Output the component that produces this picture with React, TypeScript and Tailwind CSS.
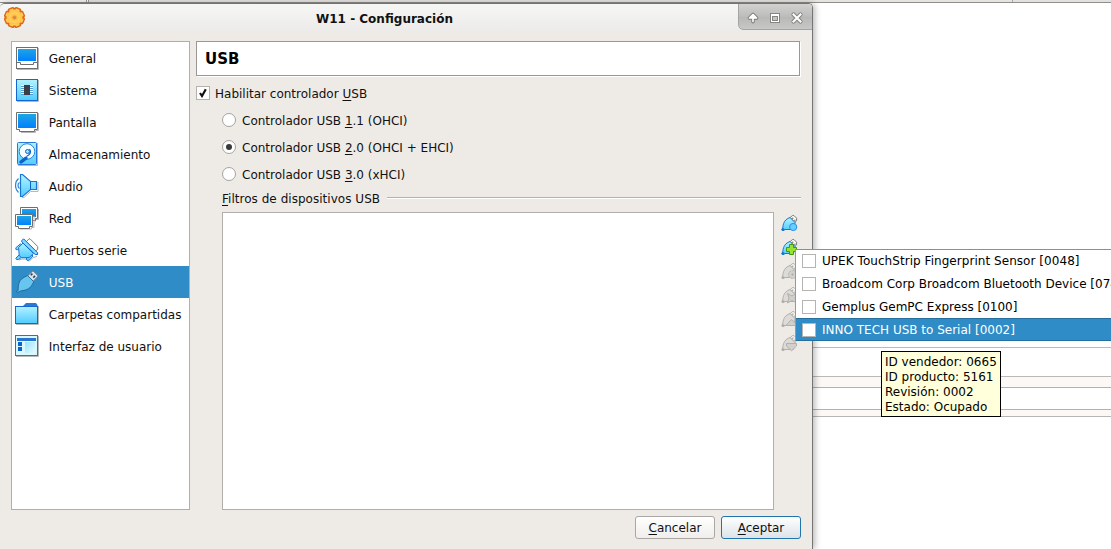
import React from 'react';

const DARK = '#0a62cc';

function Defs() {
  return (
    <svg width="0" height="0" className="absolute">
      <defs>
        <linearGradient id="screen" x1="0" y1="0" x2="0" y2="1">
          <stop offset="0" stopColor="#1fa5e4" />
          <stop offset="1" stopColor="#0080ff" />
        </linearGradient>
        <linearGradient id="aqua" x1="0" y1="0" x2="0" y2="1">
          <stop offset="0" stopColor="#b4f2ff" />
          <stop offset="1" stopColor="#50ccff" />
        </linearGradient>
        <linearGradient id="pale" x1="0" y1="0" x2="1" y2="1">
          <stop offset="0" stopColor="#98e4ff" />
          <stop offset="1" stopColor="#e4faff" />
        </linearGradient>
        <linearGradient id="gear" x1="0" y1="0" x2="0" y2="1">
          <stop offset="0" stopColor="#ffc95a" />
          <stop offset="0.6" stopColor="#ffc24a" />
          <stop offset="1" stopColor="#ffd95a" />
        </linearGradient>
      </defs>
    </svg>
  );
}

function Icon({ children }: { children: React.ReactNode }) {
  return (
    <svg width="24" height="24" viewBox="0 0 24 24" fill="none" className="shrink-0">
      {children}
    </svg>
  );
}

const icons = {
  general: (
    <Icon>
      <path d="M2 23.5H23.5V2" stroke="#b8b8b8" />
      <rect x="1.5" y="1.5" width="21" height="21" fill="#fff" stroke="#6e6e6e" />
      <rect x="3" y="3" width="18" height="12" fill="url(#screen)" />
      <path d="M2 16.5H5.5V18.5H18.5V16.5H22" stroke="#6e6e6e" />
    </Icon>
  ),
  system: (
    <Icon>
      <path d="M2 23.5H23.5V2" stroke="#b8b8b8" />
      <rect x="1.5" y="1.5" width="21" height="21" fill="url(#aqua)" stroke="#1267d2" />
      <path d="M6 7.5H18M6 9.5H18M6 11.5H18M6 13.5H18M6 15.5H18" stroke="#fff" />
      <path d="M6 8.5H18M6 10.5H18M6 12.5H18M6 14.5H18M6 16.5H18" stroke="#4f9fd0" />
      <rect x="9" y="7" width="6" height="10" fill="#3b3e48" />
    </Icon>
  ),
  display: (
    <Icon>
      <path d="M23.5 3V20.5H20.5V22.5H6" stroke="#b8b8b8" />
      <path d="M1.5 2.5H22.5V19.5H19.5V21.5H4.5V19.5H1.5Z" fill="#fff" stroke="#6e6e6e" />
      <rect x="3" y="4" width="18" height="14" fill="url(#screen)" />
    </Icon>
  ),
  storage: (
    <Icon>
      <path d="M3 23.5H22.5V1" stroke="#b8b8b8" />
      <rect x="2.5" y="0.5" width="19" height="22" rx="1" fill="url(#aqua)" stroke="#2a78d6" />
      <circle cx="12" cy="9.5" r="7.8" fill="#f4fdff" stroke="#2584dd" />
      <circle cx="12.5" cy="9.5" r="2" fill="#a5e3fa" stroke={DARK} />
      <path d="M14.5 7C16.5 9.5 15.5 12.5 11.5 14.5" stroke={DARK} strokeWidth="1.2" />
      <path d="M6 20L11 16.2" stroke={DARK} strokeWidth="3.4" strokeLinecap="round" />
    </Icon>
  ),
  audio: (
    <Icon>
      <path d="M7 23.5H9L15.5 17.5H23V8" stroke="#b8b8b8" />
      <path d="M3.5 4.5C-.5 8-.5 15 3.5 18.5M4.5 8.5C2.5 10 2.5 13 4.5 14.5" stroke="#2585da" strokeWidth="1.2" />
      <path d="M5.5 .5H7.5L15.5 7.5H21.5V15.5H15.5L7.5 22.5H5.5Z" fill="url(#aqua)" stroke="#1b76d3" strokeWidth="1.2" />
      <path d="M15.5 7.5V15.5" stroke={DARK} />
    </Icon>
  ),
  network: (
    <Icon>
      <path d="M23.5 3V13.5H20.5V15.5" stroke="#b8b8b8" />
      <path d="M5.5 1.5H22.5V12.5H20.5V14.5H5.5Z" fill="#fff" stroke="#6e6e6e" />
      <rect x="7" y="3" width="14" height="8" fill="url(#screen)" />
      <path d="M19 10V21.5H16.5V23H5" stroke="#b8b8b8" />
      <path d="M.5 8.5H17.5V20.5H14.5V22.5H3.5V20.5H.5Z" fill="#fff" stroke="#6e6e6e" />
      <rect x="2" y="10" width="14" height="9" fill="url(#screen)" />
    </Icon>
  ),
  serial: (
    <Icon>
      <path d="M4 22L7 21H12M14 23.5L18 19.5L22 18.5" stroke="#b0b0b0" />
      <path d="M11.5 3.5L14 .8H15L22.7 8.5V11.5L20.5 13Z" fill="#fff" stroke="#808080" />
      <path d="M.8 9.8L5.5 5.8L7.5 7.8L2.8 11.6H1Z" fill="#8be2ff" stroke="#1674d3" />
      <path d="M11 21L16 16L18 18L14 22.3H12Z" fill="#69d4ff" stroke="#1674d3" />
      <path d="M.8 20.2L4.5 16.5L7 19L3.5 21.5H1.5Z" fill="#69d4ff" stroke="#1674d3" />
      <path d="M8 5L3.6 9.5L4.2 17.5L6.5 19.7L14 19.6L18.5 15.5Z" fill="url(#aqua)" stroke="#1674d3" />
      <path d="M6.8 2.6L8.6 .8L22.6 14.8V16.5H20.2L6.8 4Z" fill="#7fdcff" stroke="#0c67ce" />
    </Icon>
  ),
  usb: (
    <Icon>
      <path d="M12.5 6L18 .8L23.2 6L18 11.5Z" fill="#d9e2ea" stroke="#6d7f8d" />
      <path d="M15.8 5.2L17.4 3.6M18.3 7.6L20 5.9" stroke="#2e4353" strokeWidth="1.6" />
      <path d="M2.5 21.2C4 19.5 2.5 18 3.8 13.5C5 9 8.5 7.5 12.5 5.5L18.8 11.7C16.8 15.5 15.3 18.5 10.5 20C7 21 5 20.5 2.5 22.7L1.2 21.5Z" fill="#67c6ef" stroke="#22689d" />
    </Icon>
  ),
  folder: (
    <Icon>
      <path d="M1 22.5H23.5V4" stroke="#b8b8b8" />
      <path d="M8.5 5V3.5L11 1H21L22.5 3V5Z" fill="#2b78d0" />
      <rect x="0.5" y="4.5" width="22" height="17" fill="url(#aqua)" stroke="#1267d2" />
    </Icon>
  ),
  ui: (
    <Icon>
      <path d="M1 22.5H23.5V2" stroke="#b8b8b8" />
      <rect x="0.5" y="1.5" width="22" height="20" fill="#d8f7ff" stroke="#1b78d3" />
      <rect x="2" y="4" width="19" height="3" fill="#2b74cd" />
      <rect x="3" y="8" width="4" height="4" fill={DARK} />
      <rect x="3" y="13" width="4" height="4" fill={DARK} />
      <rect x="10" y="8" width="10" height="11" fill="url(#pale)" />
    </Icon>
  ),
};

const items: [string, React.ReactNode, boolean?][] = [
  ['General', icons.general],
  ['Sistema', icons.system],
  ['Pantalla', icons.display],
  ['Almacenamiento', icons.storage],
  ['Audio', icons.audio],
  ['Red', icons.network],
  ['Puertos serie', icons.serial],
  ['USB', icons.usb, true],
  ['Carpetas compartidas', icons.folder],
  ['Interfaz de usuario', icons.ui],
];

function FilterIcon({ badge, on }: { badge: React.ReactNode; on?: boolean }) {
  const s = on ? '#1976c9' : '#b2b0ad';
  return (
    <svg width="18" height="17" viewBox="0 0 18 17" fill="none" className="block">
      <path d="M9.3 2.3L11.5 .6H13L15.6 3.2V5.8L13.8 7.5Z" fill={on ? '#fff' : '#f4f2ef'} stroke={on ? '#777' : '#b2b0ad'} />
      <path d="M11.2 3.2H12.4M13.3 5.2H14.5" stroke={on ? '#333' : '#888'} />
      <path
        d="M.9 14.7C2.2 13 1.6 11 2.6 8.5C3.6 5.5 6 3.5 9 2.5L14 7.5L12.5 14.5H4L2 15.5Z"
        fill={on ? 'url(#aqua)' : '#dddbd8'}
        stroke={s}
      />
      <circle cx="2" cy="14.4" r="1.5" fill={s} />
      {badge}
    </svg>
  );
}

function U({ children }: { children: string }) {
  return <span className="underline decoration-1 underline-offset-2 [text-decoration-skip-ink:none]">{children}</span>;
}

function Radio({ checked, children }: { checked?: boolean; children: React.ReactNode }) {
  return (
    <div className="flex h-[27px] items-center gap-[6px] pl-[26px]">
      <span className="-mt-px flex size-[14px] items-center justify-center rounded-full border border-[#a5a29f] bg-white">
        {checked && <span className="size-[6px] rounded-full bg-[#3a3a3a]" />}
      </span>
      <span className="pt-px">{children}</span>
    </div>
  );
}

const TEETH = [22.5, 67.5, 112.5, 157.5, 202.5, 247.5, 292.5, 337.5];

function TitleBar() {
  return (
    <div className="flex h-[28px] shrink-0 bg-linear-to-b from-[#f6f6f5] to-[#ecebe9]">
      <svg width="24" height="26" viewBox="0 0 24 26" className="ml-[3px]">
        <g fill="#dd6a1a">
          <circle cx="11.5" cy="13.5" r="9.8" />
          {TEETH.map((a) => (
            <rect key={a} x="8.1" y="3" width="6.8" height="6" rx="1.4" transform={`rotate(${a} 11.5 13.5)`} />
          ))}
        </g>
        <g fill="url(#gear)">
          <circle cx="11.5" cy="13.5" r="7.9" />
          {TEETH.map((a) => (
            <rect key={a} x="9.4" y="4.4" width="4.2" height="5" rx="1" transform={`rotate(${a} 11.5 13.5)`} />
          ))}
        </g>
        <circle cx="11.5" cy="13.5" r="1.6" fill="#c98a52" stroke="#ee8a35" />
      </svg>
      <div className="flex-1 pt-[8px] pl-[4px] text-center text-[12px] leading-[15px] font-bold text-[#111]">W11 - Configuración</div>
      <svg width="75" height="28" viewBox="0 0 75 28" className="-mr-px">
        <defs>
          <linearGradient id="cap" x1="0" y1="0" x2="0" y2="1">
            <stop offset="0" stopColor="#d3d3d2" />
            <stop offset=".5" stopColor="#bdbdbc" />
            <stop offset=".55" stopColor="#b8b8b7" />
            <stop offset="1" stopColor="#c9c9c8" />
          </linearGradient>
        </defs>
        <path d="M.5 -1V20Q.5 25.5 6 25.5H75V-1Z" fill="url(#cap)" stroke="#a4a4a3" />
        <g strokeLinejoin="round" strokeLinecap="round">
          <path d="M15 10.5L11.5 14H18.5ZM15 13V17.5" stroke="#858584" strokeWidth="3.8" />
          <path d="M15 10.5L11.5 14H18.5ZM15 13V17.5" fill="#fff" stroke="#fff" strokeWidth="1.6" />
        </g>
        <rect x="32" y="9" width="10" height="10" fill="#858584" />
        <rect x="33" y="10" width="8" height="8" fill="#fff" />
        <rect x="34" y="12" width="6" height="5" fill="#858584" />
        <rect x="35" y="13" width="4" height="3" fill="#c4c4c3" />
        <path d="M55.5 10.5L62.5 17.5M62.5 10.5L55.5 17.5" stroke="#858584" strokeWidth="4.2" strokeLinecap="round" />
        <path d="M55.5 10.5L62.5 17.5M62.5 10.5L55.5 17.5" stroke="#fff" strokeWidth="2" strokeLinecap="square" />
      </svg>
    </div>
  );
}

const devices = [
  'UPEK TouchStrip Fingerprint Sensor [0048]',
  'Broadcom Corp Broadcom Bluetooth Device [0748]',
  'Gemplus GemPC Express [0100]',
  'INNO TECH USB to Serial [0002]',
];

export default function App() {
  return (
    <div className="relative flex h-[549px] w-[1111px] flex-col overflow-hidden bg-white font-['DejaVu_Sans',sans-serif] text-[12px] leading-[15px] text-[#111]">
      <Defs />
      <div className="flex h-[3px] shrink-0 border-b border-[#8f8e8d] bg-[#e2e1df]">
        <div className="w-[87px] border-r border-[#999] bg-[#f4f3f2]" />
        <div className="w-[2px] border-r border-[#999] bg-white" />
        <div className="w-[924px] border-r border-[#aaa] bg-[#e6e4e1]" />
      </div>

      <div className="flex min-h-0 flex-1">
        <div className="z-10 flex w-[813px] shrink-0 flex-col overflow-hidden rounded-t-[5px] border-t border-r border-[#747474] bg-[#eeebe7] shadow-[2px_0_6px_rgba(0,0,0,0.28)]">
          <TitleBar />
          <div className="flex pt-[9px] pl-[11px]">
            <div className="h-[469px] w-[179px] shrink-0 border border-[#b1aeab] bg-white">
              {items.map(([label, icon, active]) => (
                <div
                  key={label}
                  className={
                    active
                      ? 'flex h-[32px] items-center gap-[10px] bg-[#308cc6] pl-[3px] whitespace-nowrap text-white'
                      : 'flex h-[32px] items-center gap-[10px] pl-[3px] whitespace-nowrap'
                  }
                >
                  {icon}
                  <span className="-ml-[0.2px] pt-[2px]">{label}</span>
                </div>
              ))}
            </div>

            <div className="ml-[6px] flex w-[605px] flex-col">
              <div className="flex h-[35px] w-[604px] items-center border border-[#999897] bg-white pt-[2px] pl-[8px] text-[15px] font-bold text-black shadow-[1px_1px_0_#fff]">
                USB
              </div>
              <div className="mt-[4px] flex h-[27px] items-center gap-[5px]">
                <span className="-mt-px flex size-[14px] items-center justify-center border border-[#b4b1ae] bg-white">
                  <svg width="10" height="10" viewBox="0 0 10 10" fill="none">
                    <path d="M2 5L4 8L7.8 1.3" stroke="#111" strokeWidth="2.2" />
                  </svg>
                </span>
                <span className="pt-px">
                  Habilitar controlador <U>U</U>SB
                </span>
              </div>
              <Radio>
                Controlador USB <U>1</U>.1 (OHCI)
              </Radio>
              <Radio checked>
                Controlador USB <U>2</U>.0 (OHCI + EHCI)
              </Radio>
              <Radio>
                Controlador USB <U>3</U>.0 (xHCI)
              </Radio>
              <div className="flex h-[24px] gap-[7px] pt-[4px] pl-[26px]">
                <span className="tracking-[0.03px]">
                  <U>F</U>iltros de dispositivos USB
                </span>
                <span className="mt-[5px] h-[2px] flex-1 border-t border-b border-t-[#b5b2af] border-b-white" />
              </div>
              <div className="flex pl-[26px]">
                <div className="h-[298px] w-[552px] border border-[#b1aeab] bg-white" />
                <div className="ml-[7px] flex flex-col gap-[7px] pt-[3px]">
                  <FilterIcon on badge={<circle cx="12.2" cy="12" r="3.6" fill="#66cfff" stroke="#2a8fde" />} />
                  <FilterIcon
                    on
                    badge={<path d="M8.5 5.5H12.5V8.5H15.5V12.5H12.5V15.5H8.5V12.5H5.5V8.5H8.5Z" fill="#98e22c" stroke="#3f9a0c" />}
                  />
                  <FilterIcon
                    badge={
                      <>
                        <circle cx="11.5" cy="11.5" r="4" fill="#d2d0cd" stroke="#b2b0ad" strokeDasharray="2 1" />
                        <circle cx="11.5" cy="11.5" r="1" fill="#aaa8a5" />
                      </>
                    }
                  />
                  <FilterIcon badge={<path d="M6.5 6.5L11 9L15.5 6.5L14 11L16 16L11 13.5L6.5 16L8 11Z" fill="#d2d0cd" stroke="#b2b0ad" />} />
                  <FilterIcon badge={<path d="M5 14.5L10.5 8.5L16 14.5Z" fill="#d2d0cd" stroke="#b2b0ad" />} />
                  <FilterIcon badge={<path d="M5.5 8.5H15.5V11L10.5 15.8L5.5 11Z" fill="#d2d0cd" stroke="#b2b0ad" />} />
                </div>
              </div>
              <div className="mt-[6px] flex justify-end gap-[6px]">
                <button className="h-[23px] w-[80px] rounded-[3px] border border-[#aaa7a4] bg-linear-to-b from-white to-[#f0eeeb] pt-px">
                  <U>C</U>ancelar
                </button>
                <button className="h-[23px] w-[80px] rounded-[3px] border border-[#2175ad] bg-linear-to-b from-white to-[#dce3e8] pt-px">
                  <U>A</U>ceptar
                </button>
              </div>
            </div>
          </div>
        </div>

        <div className="flex flex-1 flex-col pt-[344px]">
          <div className="h-[30px] border-y border-[#bab9b8]" />
          <div className="h-[10px] bg-[#fcf8f6]" />
          <div className="h-[23px] border-y border-[#b2b1b0]" />
          <div className="h-[6px] bg-[#fcf8f6]" />
          <div className="h-px bg-[#b7b6b5]" />
        </div>
      </div>

      <div className="absolute top-[249px] left-[795px] z-20 w-[330px] border-l border-[#999] bg-white">
        {devices.map((d, i) => (
          <div
            key={d}
            className={
              i === 3
                ? 'flex h-[23px] items-center gap-[6px] border-y border-[#256f9f] bg-[#308cc6] pl-[6px] whitespace-nowrap text-white'
                : i === 0
                  ? 'flex h-[23px] items-center gap-[6px] border-t border-[#8e8e8e] pl-[6px] tracking-[0.05px] whitespace-nowrap text-black'
                  : 'flex h-[23px] items-center gap-[6px] pl-[6px] whitespace-nowrap text-black'
            }
          >
            <span className="size-[14px] shrink-0 border border-[#b6b3b0] bg-white" />
            <span className={i === 0 ? '' : 'pt-px'}>{d}</span>
          </div>
        ))}
      </div>

      <div className="absolute top-[351px] left-[881px] z-20 h-[66px] w-[120px] border border-black bg-[#ffffdc] pt-[3px] pl-[3px] whitespace-nowrap text-black">
        <div>ID vendedor: 0665</div>
        <div>ID producto: 5161</div>
        <div>Revisión: 0002</div>
        <div>Estado: Ocupado</div>
      </div>
    </div>
  );
}
